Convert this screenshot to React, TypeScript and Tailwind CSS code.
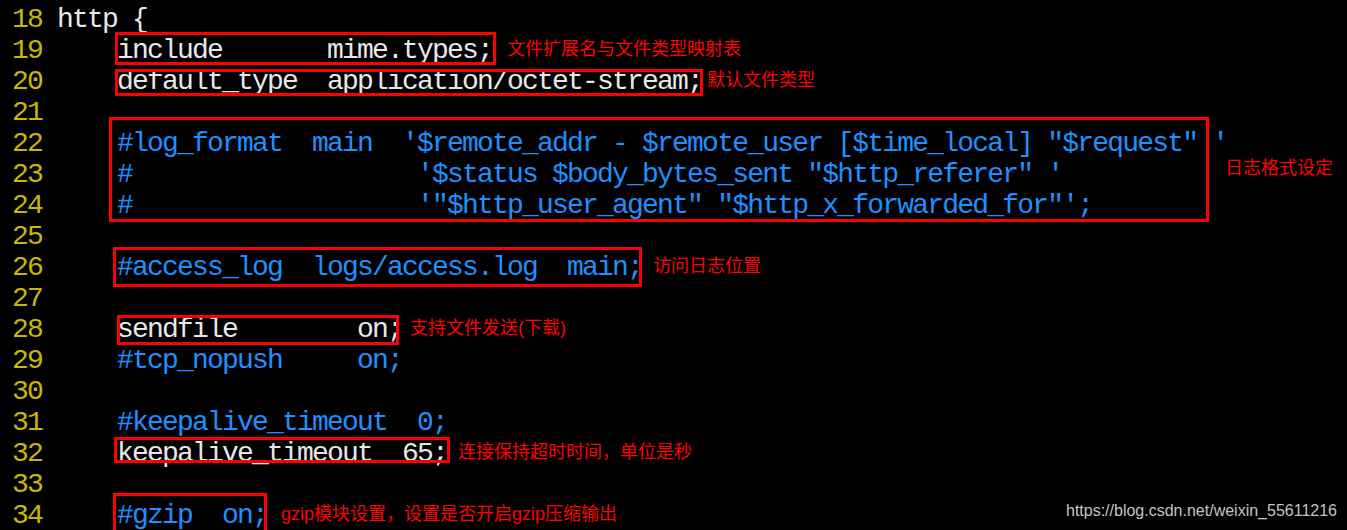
import type { ReactNode } from "react";

const white = "text-[#e8e8e8]";
const blue = "text-[#1e90ff]";

// una línea de código, 31px de alto
function Line({ children, indent = false, color = white }: { children?: ReactNode; indent?: boolean; color?: string }) {
  return (
    <div className={`flex h-[31px] items-center whitespace-pre leading-[31px] ${indent ? "pl-[60px]" : ""} ${color}`}>
      {children}
    </div>
  );
}

// texto con recuadro rojo y nota a la derecha
function Boxed({ children, frame, label, labelGap }: { children: ReactNode; frame: string; label: string; labelGap: string }) {
  return (
    <span className="relative flex h-full items-center">
      {children}
      <span className={`pointer-events-none absolute border-[3px] border-[#ff0000] ${frame}`} />
      <span
        className={`absolute left-full top-1/2 -mt-[2px] -translate-y-1/2 whitespace-nowrap font-['Liberation_Sans','Noto_Sans_CJK_SC',sans-serif] text-[18px] leading-none tracking-normal text-[#ff0000] ${labelGap}`}
      >
        {label}
      </span>
    </span>
  );
}

export default function App() {
  const numbers = Array.from({ length: 17 }, (_, i) => 18 + i);

  return (
    <div className="h-[530px] w-[1347px] overflow-hidden bg-black">
      <div className="flex pt-[4px] font-['Liberation_Mono',monospace] text-[28px] tracking-[-1.8px]">
        {/* Números de línea */}
        <div className="flex flex-col pl-[12px] pr-[15px] text-[#c9b700]">
          {numbers.map((n) => (
            <div key={n} className="h-[31px] leading-[31px]">
              {n}
            </div>
          ))}
        </div>

        {/* Código */}
        <div className="flex flex-1 flex-col">
          <Line>http {"{"}</Line>
          <Line indent>
            <Boxed frame="-top-[3px] bottom-[1px] -left-[2px] -right-[4px]" label="文件扩展名与文件类型映射表" labelGap="ml-[15px]">
              include       mime.types;
            </Boxed>
          </Line>
          <Line indent>
            <Boxed frame="top-[3px] bottom-[1px] -left-[2px] -right-[1px]" label="默认文件类型" labelGap="ml-[5px]">
              default_type  application/octet-stream;
            </Boxed>
          </Line>
          <Line />

          <div className="relative ml-[60px]">
            <Line color={blue}>#log_format  main  '$remote_addr - $remote_user [$time_local] "$request" '</Line>
            <Line color={blue}>#                   '$status $body_bytes_sent "$http_referer" '</Line>
            <Line color={blue}>#                   '"$http_user_agent" "$http_x_forwarded_for"';</Line>
            <span className="pointer-events-none absolute -bottom-[1px] -left-[8px] -top-[11px] w-[1100px] border-[3px] border-[#ff0000]" />
            <span className="absolute left-[1108px] top-[40px] -translate-y-1/2 whitespace-nowrap font-['Liberation_Sans','Noto_Sans_CJK_SC',sans-serif] text-[18px] leading-none tracking-normal text-[#ff0000]">
              日志格式设定
            </span>
          </div>

          <Line />
          <Line indent color={blue}>
            <Boxed frame="-top-[5px] -bottom-[4px] -left-[4px] right-0" label="访问日志位置" labelGap="ml-[11px]">
              #access_log  logs/access.log  main;
            </Boxed>
          </Line>
          <Line />
          <Line indent>
            <Boxed frame="top-[1px] bottom-0 left-0 right-[3px]" label="支持文件发送(下载)" labelGap="ml-[8px]">
              sendfile        on;
            </Boxed>
          </Line>
          <Line indent color={blue}>#tcp_nopush     on;</Line>
          <Line />
          <Line indent color={blue}>#keepalive_timeout  0;</Line>
          <Line indent>
            <Boxed frame="-top-[1px] bottom-[6px] -left-[3px] -right-[3px]" label="连接保持超时时间，单位是秒" labelGap="ml-[11px]">
              keepalive_timeout  65;
            </Boxed>
          </Line>
          <Line />
          <Line indent color={blue}>
            <Boxed frame="-top-[7px] -bottom-[3px] -left-[4px] right-0" label="gzip模块设置，设置是否开启gzip压缩输出" labelGap="ml-[14px]">
              #gzip  on;
            </Boxed>
            <span className="ml-auto mr-[10px] -translate-y-[5px] font-['Liberation_Sans',sans-serif] text-[16px] leading-none tracking-normal text-[#c4c4c4]">
              https://blog.csdn.net/weixin_55611216
            </span>
          </Line>
        </div>
      </div>
    </div>
  );
}
